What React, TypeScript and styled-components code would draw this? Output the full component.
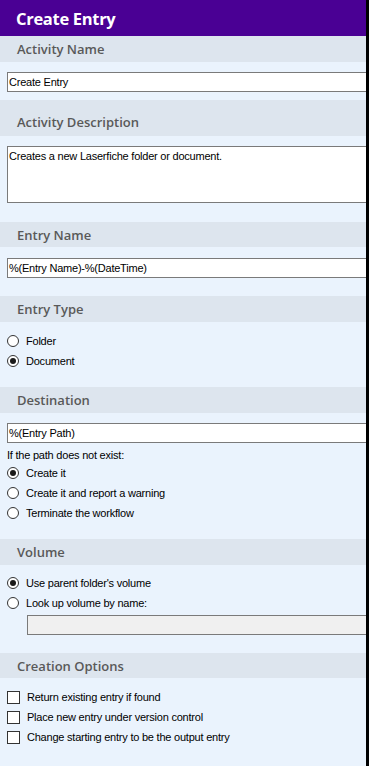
import styled, { createGlobalStyle } from "styled-components";

const GlobalStyle = createGlobalStyle`
  html, body {
    margin: 0;
    padding: 0;
    background: #000;
  }
  body {
    font-family: "Liberation Sans", Arial, sans-serif;
    font-size: 11px;
    letter-spacing: -0.22px;
    color: #000;
  }
`;

const Frame = styled.div`
  display: flex;
  width: 369px;
  height: 766px;
  background: #000;
`;

const Panel = styled.div`
  width: 366px;
  height: 766px;
  overflow: hidden;
  background: #eaf3fd;
  display: flex;
  flex-direction: column;
`;

const TitleBar = styled.header`
  height: 36px;
  flex-shrink: 0;
  background: #4a0094;
  color: #fff;
  display: flex;
  align-items: center;
  padding-left: 16px;
  font-family: "Open Sans", "Noto Sans", sans-serif;
  font-weight: 700;
  font-size: 16.5px;
  letter-spacing: -0.3px;
`;

const SectionHeader = styled.div<{ $h?: number; $shift?: number }>`
  height: ${(p) => p.$h ?? 26}px;
  box-sizing: border-box;
  padding-top: ${(p) => p.$shift ?? 0}px;
  flex-shrink: 0;
  background: #dde5ee;
  display: flex;
  align-items: center;
  padding-left: 17px;
  font-family: "Open Sans", "Noto Sans", sans-serif;
  font-weight: 600;
  font-size: 13px;
  letter-spacing: 0;
  color: #595959;
`;

const SectionBody = styled.div<{ $top: number; $bottom: number }>`
  padding: ${(p) => p.$top}px 0 ${(p) => p.$bottom}px 7px;
  display: flex;
  flex-direction: column;
`;

const TextInput = styled.div<{ $disabled?: boolean; $indent?: number }>`
  height: 20px;
  box-sizing: border-box;
  margin-left: ${(p) => p.$indent ?? 0}px;
  margin-right: -10px;
  border: 1px solid #7a7a7a;
  background: ${(p) => (p.$disabled ? "#f0f0f0" : "#fff")};
  display: flex;
  align-items: center;
  padding-left: 1px;
  white-space: nowrap;
`;

const TextArea = styled.div`
  height: 57px;
  box-sizing: border-box;
  margin-right: -10px;
  border: 1px solid #7a7a7a;
  background: #fff;
  padding: 3px 1px;
`;

const Caption = styled.div<{ $mt?: number }>`
  height: 16px;
  line-height: 16px;
  margin-top: ${(p) => p.$mt ?? 0}px;
`;

const OptionRow = styled.div`
  height: 20px;
  display: flex;
  align-items: center;
  gap: 7px;
`;

const RadioMark = styled.span<{ $checked?: boolean }>`
  width: 12px;
  height: 12px;
  box-sizing: border-box;
  border-radius: 50%;
  border: 1px solid #333;
  background: #fff;
  display: flex;
  align-items: center;
  justify-content: center;
  &::after {
    content: "";
    width: 6px;
    height: 6px;
    border-radius: 50%;
    background: ${(p) => (p.$checked ? "#1a1a1a" : "transparent")};
  }
`;

const CheckMark = styled.span`
  width: 13px;
  height: 13px;
  box-sizing: border-box;
  border: 1px solid #333;
  background: #fff;
`;

const Radio = ({ label, checked }: { label: string; checked?: boolean }) => (
  <OptionRow>
    <RadioMark $checked={checked} />
    <span>{label}</span>
  </OptionRow>
);

const Check = ({ label }: { label: string }) => (
  <OptionRow>
    <CheckMark />
    <span>{label}</span>
  </OptionRow>
);

const App = () => {
  return (
    <>
      <GlobalStyle />
      <Frame>
        <Panel>
          <TitleBar>Create Entry</TitleBar>

          <SectionHeader>Activity Name</SectionHeader>
          <SectionBody $top={10} $bottom={8}>
            <TextInput>Create Entry</TextInput>
          </SectionBody>

          <SectionHeader $h={36} $shift={8}>Activity Description</SectionHeader>
          <SectionBody $top={10} $bottom={19}>
            <TextArea>Creates a new Laserfiche folder or document.</TextArea>
          </SectionBody>

          <SectionHeader $h={25}>Entry Name</SectionHeader>
          <SectionBody $top={11} $bottom={18}>
            <TextInput>%(Entry Name)-%(DateTime)</TextInput>
          </SectionBody>

          <SectionHeader>Entry Type</SectionHeader>
          <SectionBody $top={9} $bottom={16}>
            <Radio label="Folder" />
            <Radio label="Document" checked />
          </SectionBody>

          <SectionHeader>Destination</SectionHeader>
          <SectionBody $top={10} $bottom={16}>
            <TextInput>%(Entry Path)</TextInput>
            <Caption $mt={4}>If the path does not exist:</Caption>
            <Radio label="Create it" checked />
            <Radio label="Create it and report a warning" />
            <Radio label="Terminate the workflow" />
          </SectionBody>

          <SectionHeader>Volume</SectionHeader>
          <SectionBody $top={8} $bottom={18}>
            <Radio label="Use parent folder's volume" checked />
            <Radio label="Look up volume by name:" />
            <TextInput $disabled $indent={20} style={{ marginTop: 2 }} />
          </SectionBody>

          <SectionHeader $h={25}>Creation Options</SectionHeader>
          <SectionBody $top={9} $bottom={0}>
            <Check label="Return existing entry if found" />
            <Check label="Place new entry under version control" />
            <Check label="Change starting entry to be the output entry" />
          </SectionBody>
        </Panel>
      </Frame>
    </>
  );
};

export default App;
